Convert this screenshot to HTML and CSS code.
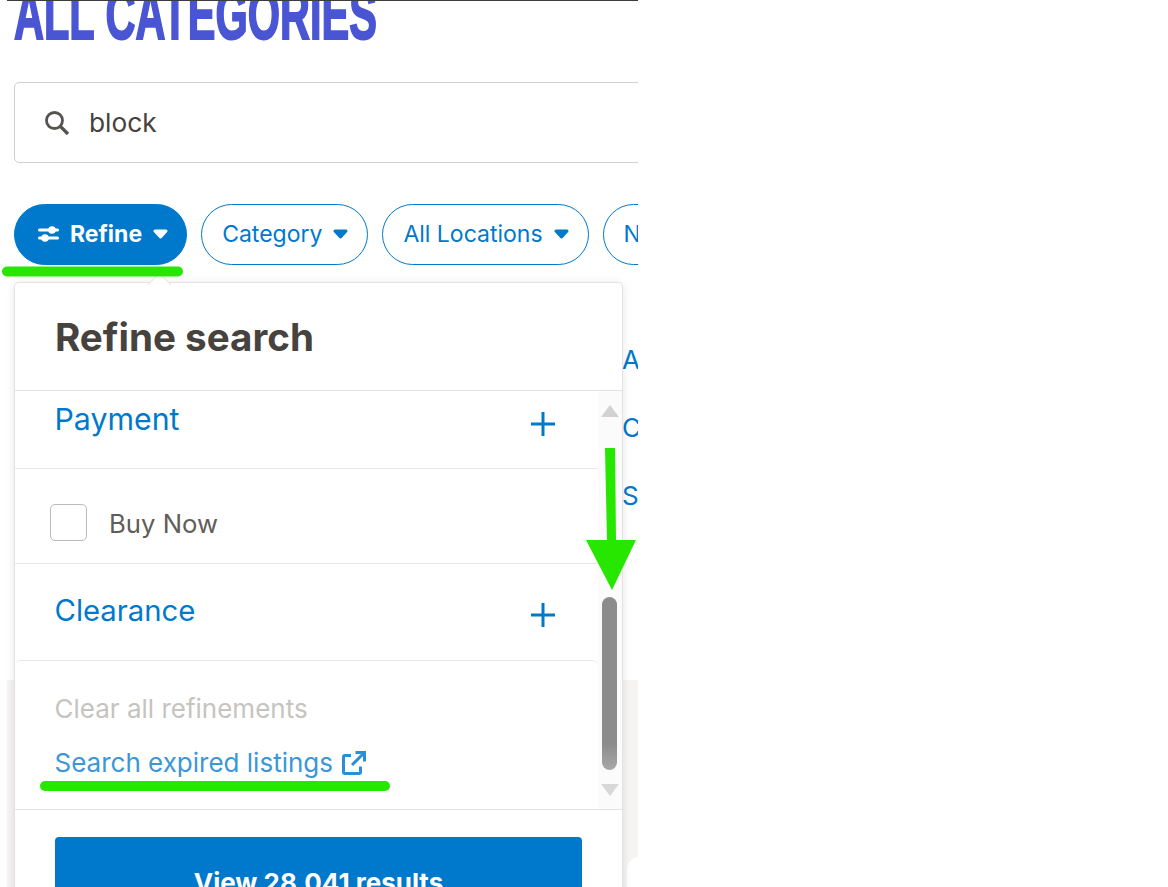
FILE: index.html

```html
<!DOCTYPE html>
<html lang="en">
<head>
    <meta charset="UTF-8">
    <title>All Categories</title>
    <link rel="stylesheet" href="styles.css">
</head>
<body>
    <div class="page">
        <h1 class="title">ALL CATEGORIES</h1>

        <div class="search">
            <svg class="search-icon" width="26" height="26" viewBox="0 0 26 26"><circle cx="10.5" cy="10.5" r="8" fill="none" stroke="#56524e" stroke-width="2.8"/><path d="M16.5 16.5L24 24" stroke="#56524e" stroke-width="3.2"/></svg>
            <span>block</span>
        </div>

        <div class="chips">
            <button class="chip chip-active">
                <svg width="21" height="20" viewBox="0 0 21 20"><path d="M1.500 6h18M1.500 14h18" stroke="#fff" stroke-width="3" stroke-linecap="round"/><circle cx="14" cy="6" r="3.800" fill="#fff"/><circle cx="7" cy="14" r="3.800" fill="#fff"/></svg>
                <span>Refine</span>
                <svg class="caret" width="15" height="10" viewBox="0 0 15 10"><path d="M2 2H13L7.500 8Z" fill="#fff" stroke="#fff" stroke-width="3" stroke-linejoin="round"/></svg>
            </button>
            <button class="chip">
                <span>Category</span>
                <svg class="caret" width="15" height="10" viewBox="0 0 15 10"><path d="M2 2H13L7.500 8Z" fill="#0079cc" stroke="#0079cc" stroke-width="3" stroke-linejoin="round"/></svg>
            </button>
            <button class="chip">
                <span>All Locations</span>
                <svg class="caret" width="15" height="10" viewBox="0 0 15 10"><path d="M2 2H13L7.500 8Z" fill="#0079cc" stroke="#0079cc" stroke-width="3" stroke-linejoin="round"/></svg>
            </button>
            <button class="chip">
                <span>New</span>
                <svg class="caret" width="15" height="10" viewBox="0 0 15 10"><path d="M2 2H13L7.500 8Z" fill="#0079cc" stroke="#0079cc" stroke-width="3" stroke-linejoin="round"/></svg>
            </button>
        </div>

        <ul class="behind-links">
            <li>All</li>
            <li>Cars</li>
            <li>Shop</li>
        </ul>

        <div class="band">
            <div class="band-card"></div>
        </div>
    </div>

    <div class="popover">
        <div class="notch"></div>
        <h2 class="popover-title">Refine search</h2>
        <div class="popover-body">
            <div class="filters">
                <div class="filter filter-payment">
                    <span>Payment</span>
                    <svg class="plus" width="24" height="24" viewBox="0 0 24 24"><path d="M12 0v24M0 12h24" stroke="#0079cc" stroke-width="3"/></svg>
                </div>
                <label class="buy-now"><i class="checkbox"></i><span>Buy Now</span></label>
                <div class="filter filter-clearance">
                    <span>Clearance</span>
                    <svg class="plus" width="24" height="24" viewBox="0 0 24 24"><path d="M12 0v24M0 12h24" stroke="#0079cc" stroke-width="3"/></svg>
                </div>
                <div class="extra">
                    <div class="clear-all">Clear all refinements</div>
                    <div class="expired">
                        <span>Search expired listings</span>
                        <svg width="24" height="24" viewBox="0 0 24 24" fill="none" stroke="#2b8fd3" stroke-width="3"><path d="M9 4.500H3a1.500 1.500 0 0 0-1.500 1.500V21A1.500 1.500 0 0 0 3 22.500H17a1.500 1.500 0 0 0 1.500-1.500V15.500"/><path d="M10 14L22 2"/><path d="M13.500 1.500H22.500V10.500"/></svg>
                    </div>
                </div>
            </div>
            <div class="scrollbar">
                <i class="arrow-up"></i>
                <div class="thumb"></div>
                <i class="arrow-down"></i>
            </div>
        </div>
        <div class="popover-footer">
            <button class="view-btn">View 28,041 results</button>
        </div>
    </div>

    <svg class="marks" width="1168" height="887" viewBox="0 0 1168 887">
        <path d="M7 271.500H178" stroke="#27e600" stroke-width="10" stroke-linecap="round"/>
        <path d="M45 786H385" stroke="#27e600" stroke-width="10" stroke-linecap="round"/>
        <path d="M605 448H615L616 540H636L612 590L586 540H607Z" fill="#27e600"/>
    </svg>
</body>
</html>
```

FILE: styles.css

```css
* {
    margin: 0;
    padding: 0;
    box-sizing: border-box;
}
html, body {
    height: 887px;
    overflow: hidden;
    background: #fff;
}
body {
    font-family: Inter, "Noto Sans", sans-serif;
    color: #46423d;
}
.page {
    width: 631px;
    height: 887px;
    margin-left: 7px;
    padding-left: 7px;
    border-top: 1px solid #3c3c3c;
    overflow: hidden;
    position: relative;
}
.title {
    font-family: "Liberation Sans", sans-serif;
    font-size: 70px;
    line-height: 60px;
    height: 81px;
    margin-top: -16px;
    margin-bottom: 16px;
    font-weight: 700;
    color: #4a55d4;
    -webkit-text-stroke: 2px #4a55d4;
    white-space: nowrap;
    transform: scaleX(0.593);
    transform-origin: left top;
}

/* search box */
.search {
    width: 700px;
    height: 81px;
    display: flex;
    align-items: center;
    gap: 19px;
    padding-left: 29px;
    border: 1px solid #d0d0ce;
    border-radius: 5px;
    font-size: 26.300px;
}

/* filter chips */
.chips {
    display: flex;
    gap: 14px;
    margin-top: 41px;
    width: 800px;
}
.chip {
    height: 61px;
    padding: 0 19px 2px 20px;
    display: flex;
    align-items: center;
    gap: 11px;
    border: 1px solid #0079cc;
    border-radius: 31px;
    background: #fff;
    color: #0079cc;
    font-family: inherit;
    font-size: 23px;
}
.chip-active {
    background: #0079cc;
    color: #fff;
    font-weight: 700;
    padding-left: 23px;
    padding-right: 18px;
}

.behind-links {
    list-style: none;
    margin: 79px 0 0 608px;
    height: 336px;
    color: #0079cc;
    font-size: 26px;
}
.behind-links li {
    height: 68px;
}
.band {
    height: 300px;
    margin: 0 0 0 -7px;
    background: #f5f4f2;
    padding: 177px 0 0 620px;
}
.band-card {
    width: 100px;
    height: 100px;
    background: #fff;
    border-radius: 12px;
}

/* popover */
.popover {
    position: absolute;
    left: 14px;
    top: 282px;
    width: 609px;
    height: 640px;
    background: #fff;
    border: 1px solid #e3e3e1;
    border-radius: 5px;
    box-shadow: 0 1px 8px rgba(0, 0, 0, 0.1);
}
.notch {
    position: absolute;
    left: 136px;
    top: -7px;
    width: 17px;
    height: 17px;
    background: #fff;
    border-left: 1px solid #e3e3e1;
    border-top: 1px solid #e3e3e1;
    transform: rotate(45deg);
}
.popover-title {
    position: relative;
    height: 108px;
    padding: 30px 0 0 40px;
    font-size: 38.600px;
    line-height: 48px;
    font-weight: 700;
    border-bottom: 1px solid #e3e3e1;
}
.popover-body {
    display: flex;
    height: 418px;
}
.filters {
    width: 583px;
}
.filter {
    display: flex;
    justify-content: space-between;
    padding: 0 43px 0 39.500px;
    color: #0079cc;
    border-bottom: 1px solid #e8e8e6;
}
.filter-payment {
    height: 78px;
    padding-top: 10px;
    font-size: 30.300px;
}
.filter-payment .plus {
    margin-top: 11px;
}
.filter-clearance {
    height: 96px;
    padding-top: 29px;
    border-bottom: 0;
    font-size: 29.300px;
}
.plus {
    margin-top: 10px;
}
.buy-now {
    height: 95px;
    display: flex;
    align-items: center;
    gap: 22px;
    padding: 15px 0 0 35px;
    font-size: 25.700px;
    color: #615d59;
    border-bottom: 1px solid #e8e8e6;
}
.checkbox {
    width: 37px;
    height: 37px;
    margin-top: -2px;
    border: 1px solid #bdbbb7;
    border-radius: 5px;
    background: #fff;
}
.extra {
    height: 149px;
    padding: 30px 0 0 39.500px;
    border-top: 1px solid #e8e8e6;
    border-radius: 6px 6px 0 0;
    font-size: 26px;
}
.clear-all {
    color: #c6c4c0;
    line-height: 36px;
}
.expired {
    display: flex;
    align-items: center;
    gap: 9px;
    margin-top: 18px;
    line-height: 36px;
    color: #3b97d6;
}
.scrollbar {
    width: 24px;
    background: #fbfbfb;
    display: flex;
    flex-direction: column;
    align-items: center;
    padding-top: 14px;
}
.arrow-up, .arrow-down {
    width: 0;
    height: 0;
    border-left: 9px solid transparent;
    border-right: 9px solid transparent;
}
.arrow-up {
    border-bottom: 12px solid #d2d2d2;
}
.arrow-down {
    border-top: 12px solid #d8d8d8;
    margin-top: 14px;
}
.thumb {
    width: 15px;
    height: 173px;
    margin: 180px 2px 0 0;
    border-radius: 8px;
    background: linear-gradient(#8c8c8c 85%, #a8a8a8);
}
.popover-footer {
    padding: 27px 40px 0;
    border-top: 1px solid #e3e3e1;
}
.view-btn {
    width: 527px;
    height: 90px;
    border: 0;
    border-radius: 4px;
    background: #0079cc;
    color: #fff;
    font-family: inherit;
    font-size: 26px;
    font-weight: 700;
}

/* green annotations on the screenshot */
.marks {
    position: absolute;
    left: 0;
    top: 0;
    pointer-events: none;
}
```
